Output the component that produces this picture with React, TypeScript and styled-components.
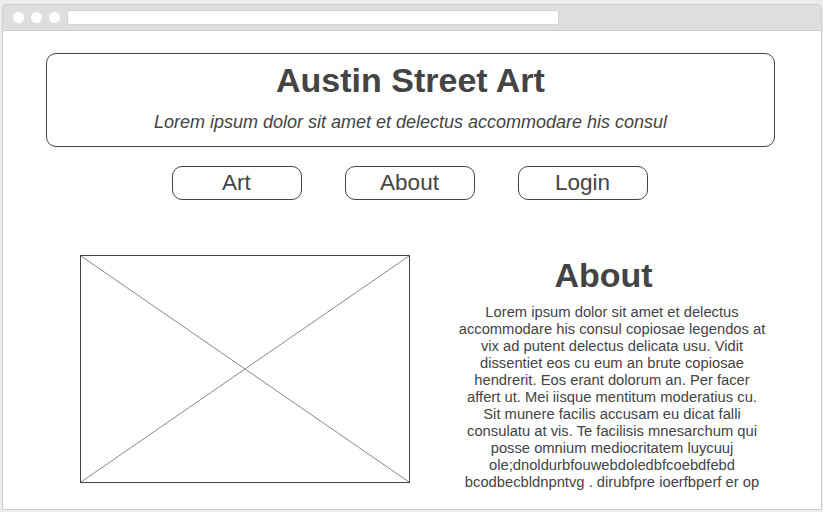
import React from 'react';
import styled, { createGlobalStyle } from 'styled-components';

const GlobalStyle = createGlobalStyle`
    html, body {
        margin: 0;
        padding: 0;
        background: #ececec;
        font-family: "Liberation Sans", Arial, sans-serif;
        color: #444;
    }
`;

const navItems = ['Art', 'About', 'Login'];

const aboutText = `Lorem ipsum dolor sit amet et delectus accommodare his consul copiosae legendos at vix ad putent delectus delicata usu. Vidit dissentiet eos cu eum an brute copiosae hendrerit. Eos erant dolorum an. Per facer affert ut. Mei iisque mentitum moderatius cu. Sit munere facilis accusam eu dicat falli consulatu at vis. Te facilisis mnesarchum qui posse omnium mediocritatem luycuuj ole;dnoldurbfouwebdoledbfcoebdfebd bcodbecbldnpntvg . dirubfpre ioerfbperf er op`;

const App: React.FC = () => {
    return (
        <>
            <GlobalStyle />
            <Window>
                <TitleBar>
                    <Dot />
                    <Dot />
                    <Dot />
                    <AddressBar />
                </TitleBar>
                <Page>
                    <Header>
                        <SiteTitle>Austin Street Art</SiteTitle>
                        <Tagline>Lorem ipsum dolor sit amet et delectus accommodare his consul</Tagline>
                    </Header>
                    <Nav>
                        {navItems.map((item) => (
                            <NavButton key={item}>{item}</NavButton>
                        ))}
                    </Nav>
                    <Content>
                        <ImagePlaceholder>
                            <svg width="100%" height="100%" viewBox="0 0 328 226" preserveAspectRatio="none">
                                <line x1="0" y1="0" x2="328" y2="226" stroke="#888" strokeWidth="1" />
                                <line x1="328" y1="0" x2="0" y2="226" stroke="#888" strokeWidth="1" />
                            </svg>
                        </ImagePlaceholder>
                        <AboutColumn>
                            <AboutTitle>About</AboutTitle>
                            <AboutText>{aboutText}</AboutText>
                        </AboutColumn>
                    </Content>
                </Page>
            </Window>
        </>
    );
};

const Window = styled.div`
    box-sizing: border-box;
    margin: 4px 0 0 2px;
    width: 820px;
    height: 506px;
    border: 1px solid #cfcfcf;
    border-radius: 4px 4px 0 0;
    background: #fff;
    overflow: hidden;
`;

const TitleBar = styled.div`
    display: flex;
    align-items: center;
    gap: 7px;
    height: 25px;
    padding-left: 10px;
    background: #dedede;
    border-bottom: 1px solid #cacaca;
`;

const Dot = styled.span`
    width: 11px;
    height: 11px;
    border-radius: 50%;
    background: #fff;
`;

const AddressBar = styled.div`
    width: 492px;
    height: 15px;
    background: #fff;
    border: 1px solid #d2d2d2;
    border-radius: 3px;
    box-sizing: border-box;
`;

const Page = styled.div`
    padding: 22px 46px 0 43px;
`;

const Header = styled.header`
    box-sizing: border-box;
    height: 94px;
    border: 1px solid #444;
    border-radius: 10px;
    display: flex;
    flex-direction: column;
    align-items: center;
    padding-top: 7px;
`;

const SiteTitle = styled.h1`
    margin: 0;
    font-size: 34px;
    font-weight: 700;
    line-height: 38px;
    color: #444;
`;

const Tagline = styled.p`
    margin: 13px 0 0;
    font-size: 18px;
    font-style: italic;
    line-height: 21px;
    color: #444;
`;

const Nav = styled.nav`
    display: flex;
    justify-content: center;
    gap: 43px;
    margin-top: 19px;
    padding-right: 2px;
`;

const NavButton = styled.button`
    box-sizing: border-box;
    width: 130px;
    height: 34px;
    border: 1px solid #444;
    border-radius: 10px;
    background: #fff;
    font-family: "Liberation Sans", Arial, sans-serif;
    font-size: 22.5px;
    color: #444;
    padding: 0;
    cursor: pointer;
`;

const Content = styled.section`
    display: flex;
    align-items: flex-start;
    margin-top: 55px;
    padding-left: 34px;
`;

const ImagePlaceholder = styled.div`
    box-sizing: border-box;
    width: 330px;
    height: 228px;
    border: 1px solid #444;
    flex-shrink: 0;
    svg {
        display: block;
    }
`;

const AboutColumn = styled.div`
    width: 308px;
    margin-left: 48px;
    text-align: center;
`;

const AboutTitle = styled.h2`
    margin: 0;
    padding-right: 17px;
    font-size: 34px;
    font-weight: 700;
    line-height: 40px;
    color: #444;
`;

const AboutText = styled.p`
    margin: 9px 0 0;
    font-size: 14.75px;
    line-height: 17px;
    color: #444;
`;

export default App;
